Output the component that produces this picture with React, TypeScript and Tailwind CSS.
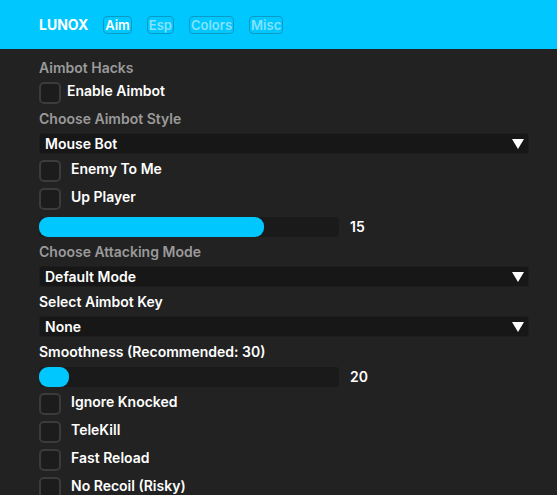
import React from "react";

const tabs = ["Aim", "Esp", "Colors", "Misc"];

const Checkbox = ({ label, gap = "gap-[10px]" }: { label: string; gap?: string }) => (
  <div className={`flex items-center ${gap}`}>
    <div className="w-[22px] h-[22px] rounded-[5px] border-2 border-[#3b3b3b] bg-[#1c1c1c]" />
    <span className="text-white font-semibold text-[14px] leading-[18px] mb-[4px]">{label}</span>
  </div>
);

const Label = ({ text, muted = true }: { text: string; muted?: boolean }) => (
  <div
    className={`h-[17px] leading-[17px] text-[14px] font-semibold ${
      muted ? "text-[#9a9a9a]" : "text-white"
    }`}
  >
    {text}
  </div>
);

const Select = ({ value }: { value: string }) => (
  <div className="h-[21px] w-[490px] flex items-center justify-between pl-[5px] pr-[4px] rounded-[3px] bg-[#171717] border border-[#1d1d1d]">
    <span className="text-white font-semibold text-[14px]">{value}</span>
    <svg width="12" height="10" viewBox="0 0 12 10">
      <path d="M0 0 L12 0 L6 10 Z" fill="#ffffff" />
    </svg>
  </div>
);

const Slider = ({ fill, value }: { fill: number; value: string }) => (
  <div className="flex items-center gap-[11px]">
    <div className="w-[300px] h-[20px] rounded-[4px] bg-[#1a1a1a]">
      <div className="h-full rounded-[9px] bg-[#00c8ff]" style={{ width: fill }} />
    </div>
    <span className="text-white font-semibold text-[14px]">{value}</span>
  </div>
);

export default function App() {
  return (
    <div
      className="w-[557px] h-[495px] overflow-hidden bg-[#222222]"
      style={{ fontFamily: "Inter, 'Noto Sans', sans-serif" }}
    >
      <header className="h-[49px] bg-[#00c8ff] flex items-center pl-[39px]">
        <span className="text-white font-bold text-[14px] mr-[15px]">LUNOX</span>
        <nav className="flex items-center gap-[15px]">
          {tabs.map((t, i) => (
            <span
              key={t}
              className={`h-[18px] leading-[16px] px-px rounded-[4px] border border-[#0a9ac4] text-[13px] font-semibold ${
                i === 0 ? "text-white" : "text-[#84e3ff]"
              }`}
            >
              {t}
            </span>
          ))}
        </nav>
      </header>

      <div className="flex flex-col gap-[6px] pl-[39px] pr-[28px] pt-[10px]">
        <Label text="Aimbot Hacks" />
        <Checkbox label="Enable Aimbot" gap="gap-[6px]" />
        <Label text="Choose Aimbot Style" />
        <Select value="Mouse Bot" />
        <Checkbox label="Enemy To Me" />
        <Checkbox label="Up Player" />
        <Slider fill={225} value="15" />
        <Label text="Choose Attacking Mode" />
        <Select value="Default Mode" />
        <Label text="Select Aimbot Key" muted={false} />
        <Select value="None" />
        <Label text="Smoothness (Recommended: 30)" muted={false} />
        <Slider fill={30} value="20" />
        <Checkbox label="Ignore Knocked" />
        <Checkbox label="TeleKill" />
        <Checkbox label="Fast Reload" />
        <Checkbox label="No Recoil (Risky)" />
      </div>
    </div>
  );
}
